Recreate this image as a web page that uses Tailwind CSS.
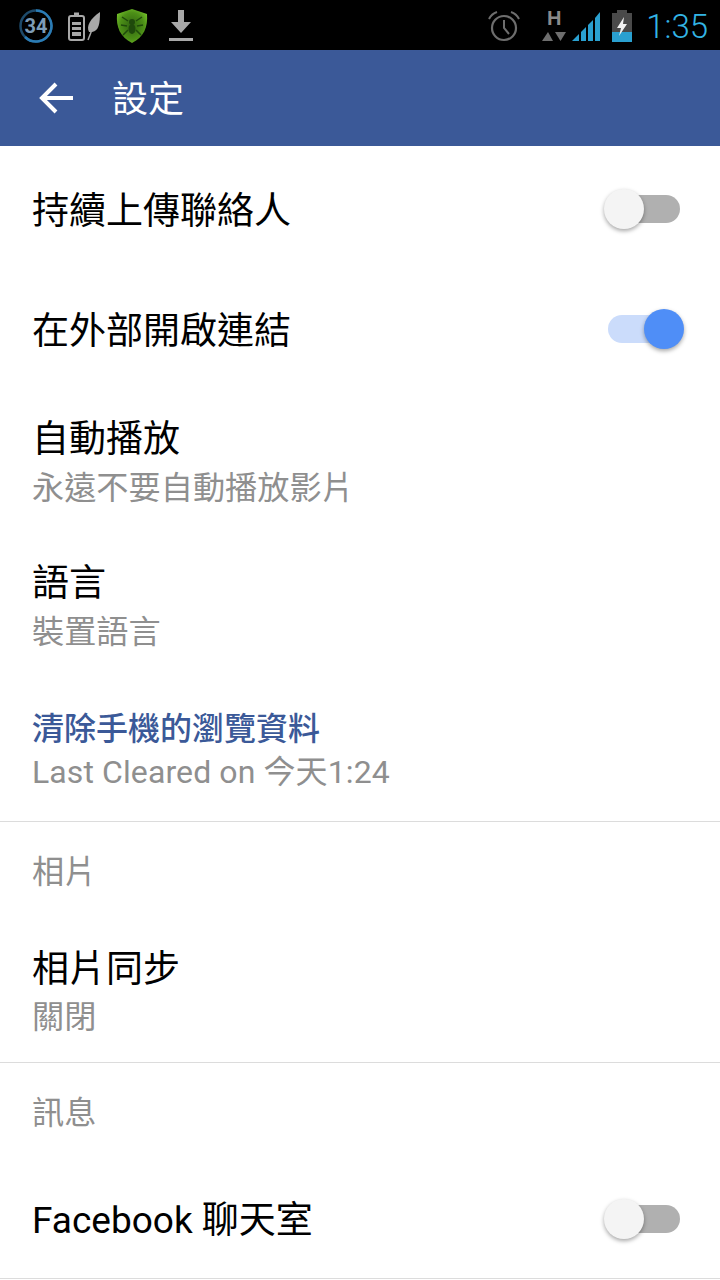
<!DOCTYPE html>
<html lang="zh-Hant">
<head>
    <meta charset="UTF-8">
    <meta name="viewport" content="width=device-width, initial-scale=1.0">
    <script src="https://cdn.jsdelivr.net/npm/@tailwindcss/browser@4"></script>
    <title>設定</title>
</head>
<body class="bg-white overflow-hidden font-['Roboto','Noto_Sans_CJK_TC',sans-serif]">
<div class="w-[720px] h-[1280px] overflow-hidden flex flex-col">
    <!--status bar-->
    <div class="h-[50px] bg-black flex items-center shrink-0">
        <svg class="ml-[18px] mt-[1px]" width="36" height="36" viewBox="0 0 36 36">
            <circle cx="18" cy="18" r="15.5" fill="none" stroke="#1d4a6b" stroke-width="2.5"/>
            <path d="M18 2.500A15.500 15.500 0 1 1 7 29" fill="none" stroke="#2b7cb5" stroke-width="2.500"/>
            <text x="18" y="25" text-anchor="middle" font-family="Roboto" font-weight="700" font-size="20" fill="#7d9db8">34</text>
        </svg>
        <svg class="ml-[13px] mt-[1px]" width="34" height="30" viewBox="0 0 34 30">
            <rect x="2" y="5" width="15" height="24" rx="2" fill="none" stroke="#a8a8a8" stroke-width="2"/>
            <rect x="7" y="1.500" width="5" height="3" fill="#a8a8a8"/>
            <rect x="5" y="11" width="9" height="3" fill="#a8a8a8"/>
            <rect x="5" y="16" width="9" height="3" fill="#a8a8a8"/>
            <rect x="5" y="21" width="9" height="4" fill="#a8a8a8"/>
            <path d="M33 1C33 12 32 20 25 21L22 21C19 15 23 8 33 1Z" fill="#a8a8a8"/>
            <path d="M28 11L21 29" stroke="#a8a8a8" stroke-width="1.500" fill="none"/>
        </svg>
        <svg class="ml-[15px] mt-[1px]" width="32" height="34" viewBox="0 0 32 34">
            <defs>
                <radialGradient id="shield" cx="50%" cy="50%" r="60%">
                    <stop offset="0" stop-color="#2f6410"/>
                    <stop offset="0.65" stop-color="#4c8f17"/>
                    <stop offset="1" stop-color="#74c02a"/>
                </radialGradient>
            </defs>
            <path d="M16 0L31 5C32 18 28 28 16 34C4 28 0 18 1 5Z" fill="url(#shield)"/>
            <circle cx="16" cy="13" r="3" fill="#1f4a0c"/>
            <ellipse cx="16" cy="20" rx="3.500" ry="5" fill="#1f4a0c"/>
            <path d="M12 12L6 8M20 12L26 8M11 17L5 16M21 17L27 16M12 21L7 26M20 21L25 26" stroke="#1f4a0c" stroke-width="1.500" fill="none"/>
        </svg>
        <svg class="ml-[20px] mt-[1px]" width="26" height="32" viewBox="0 0 26 32">
            <path d="M10 0H16V12H23L13 23L3 12H10Z" fill="#a8a8a8"/>
            <rect x="1" y="28" width="24" height="3" fill="#a8a8a8"/>
        </svg>
        <svg class="ml-auto mt-[1px]" width="34" height="32" viewBox="0 0 34 32">
            <circle cx="17" cy="18" r="12" fill="none" stroke="#6e6e6e" stroke-width="2.200"/>
            <path d="M17 10V18L22 24" fill="none" stroke="#6e6e6e" stroke-width="2"/>
            <path d="M2 9C4 5 7 3 10 2M32 9C30 5 27 3 24 2" fill="none" stroke="#6e6e6e" stroke-width="2"/>
        </svg>
        <div class="ml-[21px] w-[24px] flex flex-col items-center mt-[1px]">
            <span class="text-[#8a8a8a] text-[20px] leading-[18px] font-bold font-['Liberation_Sans',sans-serif]">H</span>
            <svg width="24" height="14" viewBox="0 0 24 14" class="mt-[2px]">
                <path d="M0 12L6 3L11 12Z" fill="#6e6e6e"/>
                <path d="M13 3H24L18.500 12Z" fill="#6e6e6e"/>
            </svg>
        </div>
        <svg class="ml-[5px] mt-[1px]" width="30" height="32" viewBox="0 0 30 32">
            <path d="M1 31L8 24V31Z" fill="#2aa0d0"/>
            <path d="M10 22L15 17V31H10Z" fill="#2aa0d0"/>
            <path d="M17 15L22 10V31H17Z" fill="#2aa0d0"/>
            <path d="M24 8L29 2V31H24Z" fill="#2aa0d0"/>
        </svg>
        <svg class="ml-[10px] mt-[1px]" width="22" height="32" viewBox="0 0 22 32">
            <rect x="6" y="0" width="10" height="3" fill="#4a4a4a"/>
            <rect x="1" y="3" width="20" height="29" fill="#4a4a4a"/>
            <rect x="1" y="22" width="20" height="10" fill="#2aa0d0"/>
            <path d="M13 7L6 18H10L8 26L16 14H12Z" fill="#f2f2f2"/>
        </svg>
        <span class="ml-[13px] mr-[12px] mt-[2px] text-[#33b5e5] text-[33px] leading-none font-['Roboto',sans-serif] font-light">1:35</span>
    </div>
    <!--header-->
    <div class="h-[96px] bg-[#3b5998] flex items-center shrink-0">
        <svg class="ml-[39px]" width="35" height="32" viewBox="0 0 35 32">
            <path d="M34 16H3M17 2L3 16L17 30" fill="none" stroke="#fff" stroke-width="4"/>
        </svg>
        <h1 class="ml-[38px] mt-[3px] text-white text-[36px] leading-none">設定</h1>
    </div>
    <!--settings list-->
    <div class="flex flex-col pl-[32px] text-black">
        <div class="h-[120px] mt-[3px] flex items-center pr-[40px]">
            <span class="text-[37px] leading-none pt-[4px]">持續上傳聯絡人</span>
            <div class="relative h-[28px] rounded-full bg-[#b0b0b0] ml-auto w-[68px]">
                <div class="absolute left-[-8px] top-[-6px] w-[40px] h-[40px] rounded-full bg-[#f4f4f4] shadow-[0_2px_4px_rgba(0,0,0,0.35)]"></div>
            </div>
        </div>
        <div class="h-[120px] flex items-center pr-[40px]">
            <span class="text-[37px] leading-none pt-[4px]">在外部開啟連結</span>
            <div class="relative h-[28px] rounded-full bg-[#cbdcfb] ml-auto w-[72px]">
                <div class="absolute right-[-4px] top-[-6px] w-[40px] h-[40px] rounded-full bg-[#4f8ef7] shadow-[0_2px_4px_rgba(0,0,0,0.35)]"></div>
            </div>
        </div>
        <div class="h-[145px] pt-[31px]">
            <p class="text-[37px] leading-[40px]">自動播放</p>
            <p class="text-[32.2px] leading-[40px] mt-[8px] text-[#8f8f8f]">永遠不要自動播放影片</p>
        </div>
        <div class="h-[145px] pt-[30px]">
            <p class="text-[37px] leading-[40px]">語言</p>
            <p class="text-[32.2px] leading-[40px] mt-[8px] text-[#8f8f8f]">裝置語言</p>
        </div>
        <div class="h-[142px] pt-[30px]">
            <p class="text-[32px] leading-[40px] font-medium text-[#3b5998]">清除手機的瀏覽資料</p>
            <p class="text-[32px] leading-[40px] mt-[3px] tracking-[0.1px] text-[#8f8f8f]">Last Cleared on 今天1:24</p>
        </div>
    </div>
    <div class="h-px bg-[#dcdcdc]"></div>
    <div class="flex flex-col pl-[32px]">
        <p class="text-[32.2px] leading-[40px] mt-[30px] text-[#8f8f8f]">相片</p>
        <p class="text-[37px] leading-[40px] mt-[58px] text-black">相片同步</p>
        <p class="text-[32.2px] leading-[40px] mt-[7px] text-[#8f8f8f]">關閉</p>
    </div>
    <div class="h-px bg-[#dcdcdc] mt-[25px]"></div>
    <div class="flex flex-col pl-[32px]">
        <p class="text-[32.2px] leading-[40px] mt-[30px] text-[#8f8f8f]">訊息</p>
        <div class="h-[120px] mt-[25px] flex items-center pr-[40px]">
            <span class="text-[37px] leading-none text-black pt-[4px]">Facebook 聊天室</span>
            <div class="relative h-[28px] rounded-full bg-[#b0b0b0] ml-auto w-[68px] mt-[2px]">
                <div class="absolute left-[-8px] top-[-6px] w-[40px] h-[40px] rounded-full bg-[#f4f4f4] shadow-[0_2px_4px_rgba(0,0,0,0.35)]"></div>
            </div>
        </div>
    </div>
    <div class="h-px bg-[#dcdcdc]"></div>
</div>
</body>
</html>
